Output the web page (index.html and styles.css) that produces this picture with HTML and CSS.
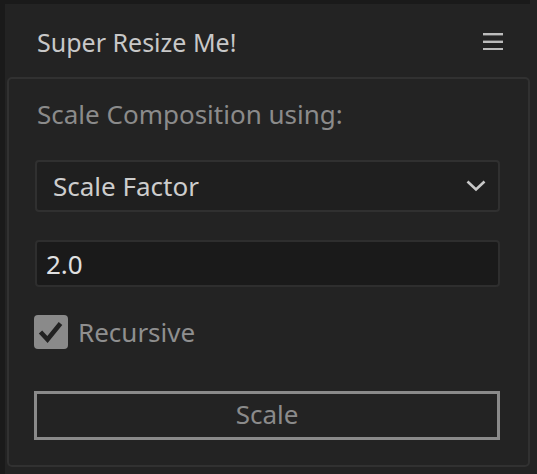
FILE: index.html
```html
<!DOCTYPE html>
<html>
<head>
<meta charset="utf-8">
<link rel="stylesheet" href="styles.css">
</head>
<body>
<div class="app">
  <div class="topbar"></div>
  <header class="header">
    <h1 class="title">Super Resize Me!</h1>
    <svg class="menu" width="20" height="18" viewBox="0 0 20 18">
      <rect x="0" y="1" width="20" height="2.4" fill="#bcbcbc"/>
      <rect x="0" y="8.6" width="20" height="2.4" fill="#bcbcbc"/>
      <rect x="0" y="16" width="20" height="2.4" fill="#bcbcbc"/>
    </svg>
  </header>
  <main class="panel">
    <div class="label">Scale Composition using:</div>
    <div class="select">
      <span>Scale Factor</span>
      <svg class="chevron" width="20" height="12" viewBox="0 0 20 12">
        <path d="M1.5 1.5 L10 9.5 L18.5 1.5" fill="none" stroke="#c8c8c8" stroke-width="2.6"/>
      </svg>
    </div>
    <div class="input">2.0</div>
    <label class="check">
      <span class="box">
        <svg width="34" height="34" viewBox="0 0 34 34">
          <path d="M6.5 17 L13.5 24.5 L26.5 8.5" fill="none" stroke="#222222" stroke-width="4.6"/>
        </svg>
      </span>
      <span class="check-text">Recursive</span>
    </label>
    <div class="button">Scale</div>
  </main>
</div>
</body>
</html>
```
FILE: styles.css
```css
html, body {
  margin: 0;
  padding: 0;
  background: #232323;
}
body {
  font-family: "Noto Sans", "Open Sans", sans-serif;
  width: 537px;
  height: 474px;
  overflow: hidden;
}
.app {
  border-left: 5px solid #1a1a1a;
  height: 474px;
  box-sizing: border-box;
  display: flex;
  flex-direction: column;
}
.topbar {
  height: 4px;
  background: #1a1a1a;
  margin-right: 7px;
}
.header {
  height: 73px;
  display: flex;
  align-items: center;
  justify-content: space-between;
  padding: 0 34px 0 32px;
  box-sizing: border-box;
}
.title {
  margin: 0;
  font-weight: normal;
  font-size: 25px;
  line-height: 30px;
  color: #c8c8c8;
  position: relative;
  top: 1px;
}
.menu {
  display: block;
}
.panel {
  margin: 0 7px 7px 2px;
  border: 2px solid #313131;
  border-radius: 5px;
  padding: 20px 28px 0 26px;
  flex: 1;
  display: flex;
  flex-direction: column;
}
.label {
  font-size: 26px;
  line-height: 30px;
  color: #8b8b8b;
  padding-left: 2px;
}
.select {
  margin-top: 31px;
  height: 52px;
  box-sizing: border-box;
  border: 2px solid #303030;
  border-radius: 4px;
  background: #1f1f1f;
  display: flex;
  align-items: center;
  justify-content: space-between;
  padding: 0 12px 0 16px;
  font-size: 26px;
  color: #cdcdcd;
}
.chevron {
  display: block;
}
.input {
  margin-top: 28px;
  height: 47px;
  box-sizing: border-box;
  border: 2px solid #2e2e2e;
  border-radius: 4px;
  background: #1a1a1a;
  display: flex;
  align-items: center;
  padding-left: 9px;
  font-size: 26px;
  color: #e0e0e0;
}
.check {
  margin-top: 27px;
  margin-left: -1px;
  display: flex;
  align-items: center;
  gap: 10px;
}
.box {
  width: 34px;
  height: 34px;
  border-radius: 4px;
  background: #8a8a8a;
  display: block;
}
.box svg {
  display: block;
}
.check-text {
  font-size: 26px;
  color: #8f8f8f;
}
.button {
  margin-top: 41px;
  margin-left: -1px;
  height: 49px;
  box-sizing: border-box;
  border: 3px solid #8a8a8a;
  background: #232323;
  display: flex;
  align-items: center;
  justify-content: center;
  padding-bottom: 3px;
  font-size: 26px;
  color: #8b8b8b;
}
```
